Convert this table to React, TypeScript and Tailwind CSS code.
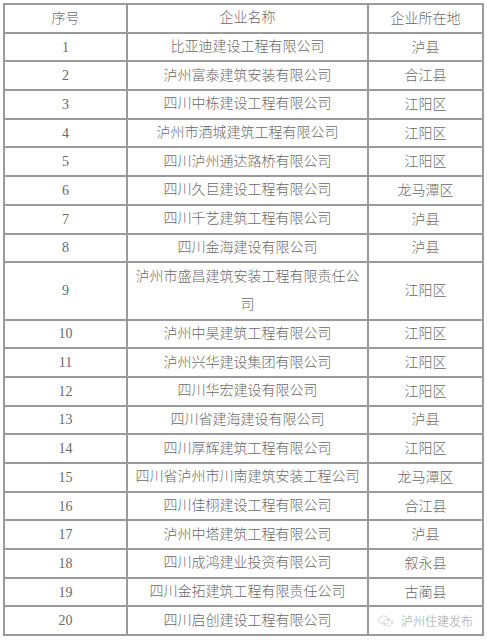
const rows: [string, string, string][] = [
  ["1", "比亚迪建设工程有限公司", "泸县"],
  ["2", "泸州富泰建筑安装有限公司", "合江县"],
  ["3", "四川中栋建设工程有限公司", "江阳区"],
  ["4", "泸州市酒城建筑工程有限公司", "江阳区"],
  ["5", "四川泸州通达路桥有限公司", "江阳区"],
  ["6", "四川久巨建设工程有限公司", "龙马潭区"],
  ["7", "四川千艺建筑工程有限公司", "泸县"],
  ["8", "四川金海建设有限公司", "泸县"],
  ["9", "泸州市盛昌建筑安装工程有限责任公司", "江阳区"],
  ["10", "泸州中昊建筑工程有限公司", "江阳区"],
  ["11", "泸州兴华建设集团有限公司", "江阳区"],
  ["12", "四川华宏建设有限公司", "江阳区"],
  ["13", "四川省建海建设有限公司", "泸县"],
  ["14", "四川厚辉建筑工程有限公司", "江阳区"],
  ["15", "四川省泸州市川南建筑安装工程公司", "龙马潭区"],
  ["16", "四川佳栩建设工程有限公司", "合江县"],
  ["17", "泸州中塔建筑工程有限公司", "泸县"],
  ["18", "四川成鸿建业投资有限公司", "叙永县"],
  ["19", "四川金拓建筑工程有限责任公司", "古蔺县"],
  ["20", "四川启创建设工程有限公司", ""],
];

const font = { fontFamily: '"Liberation Serif", "Noto Sans CJK SC", serif' };

function Watermark() {
  return (
    <div className="flex items-center gap-[8px] text-[12px] text-[#a3a3a3]" style={{ fontFamily: '"Noto Sans CJK SC", sans-serif' }}>
      <svg width="15" height="12" viewBox="0 0 15 12" fill="none" stroke="#b5b5b5" strokeWidth="1" strokeDasharray="1.5 1.2">
        <ellipse cx="5.5" cy="5" rx="5" ry="4" />
        <ellipse cx="10" cy="7.5" rx="4.2" ry="3.4" />
      </svg>
      <span>泸州住建发布</span>
    </div>
  );
}

function Row({ cells, tall, last, watermark }: { cells: [string, string, string]; tall?: boolean; last?: boolean; watermark?: boolean }) {
  const h = tall ? (last ? "h-[55.4px]" : "h-[57.4px]") : last ? "h-[26.7px]" : "h-[28.7px]";
  return (
    <div className={`flex ${h} ${last ? "" : "border-b-2 border-[#9a9a9a]"}`}>
      <div className="w-[123px] shrink-0 border-r-2 border-[#9a9a9a] flex items-center justify-center">{cells[0]}</div>
      <div className="w-[241px] shrink-0 border-r-2 border-[#9a9a9a] flex items-center justify-center px-[7px] text-center leading-[28px]">
        {cells[1]}
      </div>
      <div className="w-[113px] shrink-0 flex items-center justify-center">
        {watermark ? <Watermark /> : cells[2]}
      </div>
    </div>
  );
}

export default function App() {
  return (
    <div className="w-[487px] h-[640px] bg-white overflow-hidden pt-[3px] pl-[3px]">
      <div className="w-[481px] border-2 border-[#9a9a9a] text-[14px] font-light text-[#6a6a6a]" style={font}>
        <Row cells={["序号", "企业名称", "企业所在地"]} />
        {rows.map((r, i) => (
          <Row key={r[0]} cells={r} tall={r[0] === "9"} last={i === rows.length - 1} watermark={r[0] === "20"} />
        ))}
      </div>
    </div>
  );
}
